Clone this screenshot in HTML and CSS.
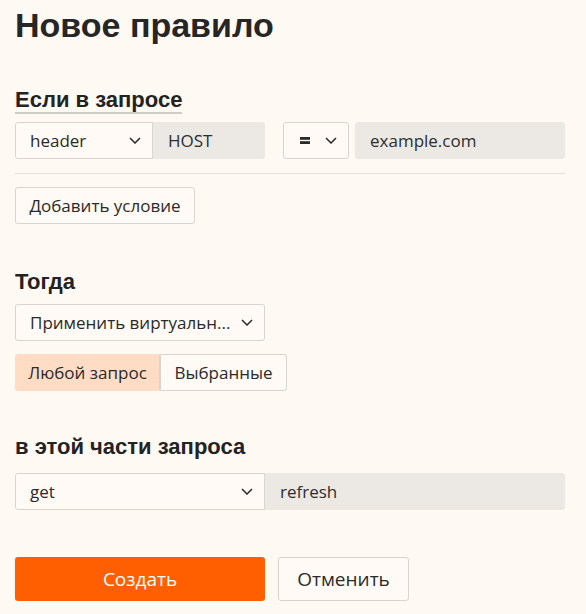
FILE: index.html
```html
<!DOCTYPE html>
<html lang="ru">
<head>
<meta charset="utf-8">
<title>Новое правило</title>
<link rel="stylesheet" href="styles.css">
</head>
<body>
<main class="page">
  <h1 class="title">Новое правило</h1>

  <h2 class="section-title section-title--underlined">Если в запросе</h2>
  <div class="cond-row">
    <div class="pair">
      <div class="select select--header">
        <span class="select__value">header</span>
        <svg class="chevron" width="12" height="7" viewBox="0 0 12 7"><polyline points="1,1 6,6 11,1" fill="none" stroke="#2a2a2a" stroke-width="1.5"/></svg>
      </div>
      <div class="field field--host">HOST</div>
    </div>
    <div class="pair pair--right">
      <div class="select select--op">
        <svg class="eq" width="10" height="7" viewBox="0 0 10 7"><rect x="0" y="0" width="10" height="2.8" fill="#2a2a2a"/><rect x="0" y="4.2" width="10" height="2.8" fill="#2a2a2a"/></svg>
        <svg class="chevron" width="12" height="7" viewBox="0 0 12 7"><polyline points="1,1 6,6 11,1" fill="none" stroke="#2a2a2a" stroke-width="1.5"/></svg>
      </div>
      <div class="field field--value">example.com</div>
    </div>
  </div>
  <div class="divider"></div>
  <button class="btn btn--plain btn--add">Добавить условие</button>

  <h2 class="section-title section-title--then">Тогда</h2>
  <div class="select select--action">
    <span class="select__value">Применить виртуальн...</span>
    <svg class="chevron" width="12" height="7" viewBox="0 0 12 7"><polyline points="1,1 6,6 11,1" fill="none" stroke="#2a2a2a" stroke-width="1.5"/></svg>
  </div>
  <div class="segmented">
    <button class="segmented__item segmented__item--active">Любой запрос</button>
    <button class="segmented__item">Выбранные</button>
  </div>

  <h2 class="section-title section-title--part">в этой части запроса</h2>
  <div class="pair pair--part">
    <div class="select select--part">
      <span class="select__value">get</span>
      <svg class="chevron" width="12" height="7" viewBox="0 0 12 7"><polyline points="1,1 6,6 11,1" fill="none" stroke="#2a2a2a" stroke-width="1.5"/></svg>
    </div>
    <div class="field field--part">refresh</div>
  </div>

  <div class="actions">
    <button class="btn btn--primary">Создать</button>
    <button class="btn btn--plain btn--cancel">Отменить</button>
  </div>
</main>
</body>
</html>
```
FILE: styles.css
```css
* { box-sizing: border-box; }
html, body { margin: 0; padding: 0; }
body {
  background: #fff9f4;
  color: #2a2a2a;
  font-family: "Open Sans", "Noto Sans", sans-serif;
  font-size: 17px;
}
.page {
  width: 550px;
  margin-left: 15px;
  padding-top: 5px;
  display: flex;
  flex-direction: column;
  align-items: flex-start;
}
.title {
  margin: 0;
  font-family: "Liberation Sans", Arial, sans-serif;
  font-weight: 700;
  font-size: 34px;
  line-height: 40px;
  color: #262626;
}
.section-title {
  margin: 0;
  font-family: "Liberation Sans", Arial, sans-serif;
  font-weight: 700;
  font-size: 22px;
  line-height: 24px;
  color: #232323;
}
.section-title--underlined {
  margin-top: 43px;
  border-bottom: 2px solid #cfcbc6;
}
.section-title--then { margin-top: 46px; }
.section-title--part { margin-top: 44px; }

.cond-row {
  margin-top: 8px;
  width: 100%;
  display: flex;
  gap: 18px;
}
.pair { display: flex; }
.pair--right { gap: 6px; flex: 1; }

.select {
  height: 37px;
  border: 1px solid #d8d4cf;
  border-radius: 3px;
  background: #fffaf5;
  display: flex;
  align-items: center;
  justify-content: space-between;
  padding: 0 11px 0 14px;
  line-height: 1;
}
.select__value { white-space: nowrap; }
.chevron { flex: none; display: block; }
.select--header { width: 138px; border-radius: 3px 0 0 3px; }
.select--op { width: 66px; padding-left: 16px; }
.select--op .eq { display: block; margin-right: 5px; }
.select--action { width: 250px; margin-top: 10px; }
.select--part { width: 250px; border-radius: 3px 0 0 3px; }

.field {
  height: 37px;
  background: #ece8e3;
  border-radius: 0 3px 3px 0;
  display: flex;
  align-items: center;
  padding: 0 15px;
  color: #2e2e2e;
}
.field--host { width: 112px; }
.field--value { flex: 1; border-radius: 3px; }
.field--part { width: 300px; }

.divider {
  width: 100%;
  height: 1px;
  background: #e6e1dc;
  margin-top: 14px;
}

.btn {
  font-family: inherit;
  font-size: 17px;
  color: #2a2a2a;
  cursor: pointer;
  border-radius: 3px;
  white-space: nowrap;
}
.btn--plain {
  background: #fffaf5;
  border: 1px solid #d8d4cf;
  padding: 0 10px;
}
.btn--add { margin-top: 13px; height: 37px; width: 180px; }

.segmented {
  margin-top: 13px;
  display: flex;
}
.segmented__item {
  height: 37px;
  font-family: inherit;
  font-size: 17px;
  color: #2a2a2a;
  background: #fffaf5;
  border: 1px solid #d8d4cf;
  padding: 0 8px;
  white-space: nowrap;
}
.segmented__item:first-child { border-radius: 3px 0 0 3px; border-right-width: 2px; }
.segmented__item:last-child { border-radius: 0 3px 3px 0; border-left: none; width: 126px; }
.segmented__item--active {
  background: #ffdcc3;
  border-color: #ffdcc3;
  border-right-color: #d8d4cf;
  width: 146px;
}

.pair--part { margin-top: 14px; }

.actions {
  margin-top: 47px;
  display: flex;
  gap: 13px;
}
.btn--primary {
  width: 250px;
  height: 44px;
  background: #ff5f00;
  border: none;
  color: #ffffff;
  font-size: 19px;
}
.btn--cancel { width: 131px; height: 44px; font-size: 19px; }
```
